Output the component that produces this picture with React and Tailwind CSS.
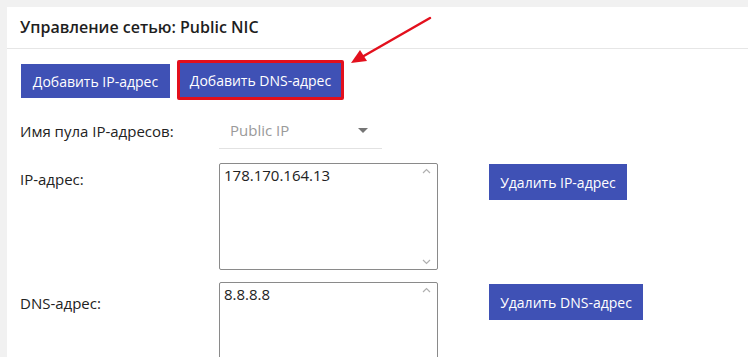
import React from 'react';

const font = { fontFamily: '"Open Sans", "Noto Sans", sans-serif' };

const Scroller = () => (
  <div className="absolute right-[6px] top-[4px] bottom-[4px] flex flex-col justify-between text-[#b0b0b0]">
    <svg width="9" height="6" viewBox="0 0 9 6">
      <path d="M1 5 L4.5 1.5 L8 5" fill="none" stroke="currentColor" strokeWidth="1.2" />
    </svg>
    <svg width="9" height="6" viewBox="0 0 9 6">
      <path d="M1 1 L4.5 4.5 L8 1" fill="none" stroke="currentColor" strokeWidth="1.2" />
    </svg>
  </div>
);

const Area = ({ value, className }) => (
  <div className={`relative w-[219px] border border-[#8a8a8a] rounded-[2px] bg-white ${className}`}>
    <div className="pl-[4px] pt-[1px] text-[15px] leading-[20px] text-[#222]">{value}</div>
    <Scroller />
  </div>
);

const App = () => {
  return (
    <div className="relative w-[748px] h-[357px] overflow-hidden bg-[#f1f1f1] pt-[7px] pl-[7px]" style={font}>
      <div className="bg-white h-full">
        <div className="h-[42px] border-b border-[#e6e6e6] pl-[13px] flex items-center">
          <h2 className="text-[16px] font-semibold text-[#1e1e1e] mt-[-1px]">Управление сетью: Public NIC</h2>
        </div>

        <div className="flex items-center pl-[14px] pt-[11px] gap-[7px]">
          <button className="h-[34px] w-[149px] bg-[#3f51b5] text-white text-[14px] mt-[2px]">
            Добавить IP-адрес
          </button>
          <div className="border-[3px] border-[#e3101d] rounded-[2px]">
            <button className="h-[34px] w-[161px] bg-[#3f51b5] text-white text-[14px] block">
              Добавить DNS-адрес
            </button>
          </div>
        </div>

        <div className="pl-[13px] mt-[13px]">
          <div className="flex items-center h-[36px]">
            <div className="w-[199px] text-[15px] text-[#222]">Имя пула IP-адресов:</div>
            <div className="w-[163px] h-[36px] border-b border-[#e2e2e2] flex items-center justify-between pl-[11px] pr-[14px]">
              <span className="text-[15px] text-[#9a9a9a]">Public IP</span>
              <svg width="10" height="5" viewBox="0 0 10 5">
                <path d="M0 0 L10 0 L5 5 Z" fill="#757575" />
              </svg>
            </div>
          </div>

          <div className="flex mt-[14px]">
            <div className="w-[199px] text-[15px] text-[#222] pt-[5px]">IP-адрес:</div>
            <Area value="178.170.164.13" className="h-[107px]" />
            <button className="ml-[51px] mt-[1px] h-[36px] w-[138px] bg-[#3f51b5] text-white text-[14px]">
              Удалить IP-адрес
            </button>
          </div>

          <div className="flex mt-[12px]">
            <div className="w-[199px] text-[15px] text-[#222] pt-[10px]">DNS-адрес:</div>
            <Area value="8.8.8.8" className="h-[107px]" />
            <button className="ml-[51px] mt-[2px] h-[36px] w-[154px] bg-[#3f51b5] text-white text-[14px]">
              Удалить DNS-адрес
            </button>
          </div>
        </div>
      </div>

      <svg className="absolute left-0 top-0 pointer-events-none" width="748" height="357">
        <line x1="430" y1="18" x2="362" y2="57" stroke="#e3101d" strokeWidth="2.5" strokeLinecap="round" />
        <polygon points="351,63 360,50 367,61" fill="#e3101d" />
      </svg>
    </div>
  );
};

export default App;
